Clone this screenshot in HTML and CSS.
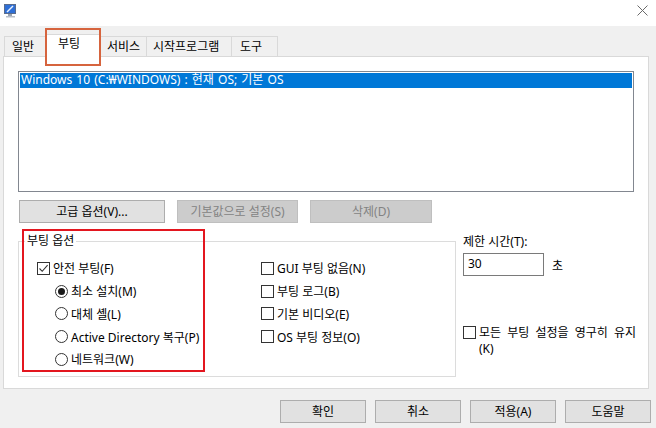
FILE: index.html
```html
<!DOCTYPE html>
<html lang="ko">
<head>
<meta charset="utf-8">
<title>시스템 구성</title>
<link rel="stylesheet" href="styles.css">
</head>
<body>
<div class="window">
  <div class="titlebar">
    <svg class="app-icon" width="15" height="15" viewBox="0 0 15 15">
      <rect x="1" y="1" width="12" height="10" fill="#5a6c8c"/>
      <rect x="2" y="2" width="10" height="8" fill="#2f6fd6"/>
      <path d="M4 9 L10 3" stroke="#e8f2ff" stroke-width="1.4"/>
      <rect x="5" y="11" width="4" height="2" fill="#9aa3b0"/>
      <rect x="3" y="13" width="9" height="1.5" fill="#b9bfc8"/>
    </svg>
    <svg class="close" width="11" height="11" viewBox="0 0 11 11">
      <path d="M0.5 0.5 L10.5 10.5 M10.5 0.5 L0.5 10.5" stroke="#6a6a6a" stroke-width="1"/>
    </svg>
  </div>

  <div class="tabs">
    <div class="tab">일반</div>
    <div class="tab active">부팅</div>
    <div class="tab">서비스</div>
    <div class="tab">시작프로그램</div>
    <div class="tab">도구</div>
  </div>

  <div class="panel">
    <div class="listbox">
      <div class="item selected">Windows 10 (C:₩WINDOWS) : 현재 OS; 기본 OS</div>
    </div>

    <div class="btnrow">
      <div class="btn w146">고급 옵션(V)...</div>
      <div class="btn disabled w121">기본값으로 설정(S)</div>
      <div class="btn disabled w122">삭제(D)</div>
    </div>

    <div class="lower">
      <div class="group">
        <span class="group-label">부팅 옵션</span>
        <div class="group-cols">
          <div class="col left">
            <div class="row"><span class="cb checked"><svg width="11" height="11" viewBox="0 0 11 11"><path d="M1.5 5.5 L4.2 8.3 L9.6 2.2" fill="none" stroke="#333" stroke-width="1.1"/></svg></span><span>안전 부팅(F)</span></div>
            <div class="row indent"><span class="rb on"></span><span>최소 설치(M)</span></div>
            <div class="row indent"><span class="rb"></span><span>대체 셸(L)</span></div>
            <div class="row indent"><span class="rb"></span><span>Active Directory 복구(P)</span></div>
            <div class="row indent"><span class="rb"></span><span>네트워크(W)</span></div>
          </div>
          <div class="col right">
            <div class="row"><span class="cb"></span><span>GUI 부팅 없음(N)</span></div>
            <div class="row"><span class="cb"></span><span>부팅 로그(B)</span></div>
            <div class="row"><span class="cb"></span><span>기본 비디오(E)</span></div>
            <div class="row"><span class="cb"></span><span>OS 부팅 정보(O)</span></div>
          </div>
        </div>
      </div>

      <div class="side">
        <div class="side-label">제한 시간(T):</div>
        <div class="timeout">
          <div class="textbox">30</div>
          <span class="unit">초</span>
        </div>
        <div class="persist">
          <span class="cb"></span>
          <span class="persist-text">모든 부팅 설정을 영구히 유지<br>(K)</span>
        </div>
      </div>
    </div>
  </div>

  <div class="footer">
    <div class="btn fbtn">확인</div>
    <div class="btn fbtn">취소</div>
    <div class="btn fbtn">적용(A)</div>
    <div class="btn fbtn">도움말</div>
  </div>

  <div class="mark mark-tab"></div>
  <div class="mark mark-group"></div>
</div>
</body>
</html>
```

FILE: styles.css
```css
* { box-sizing: border-box; }

html, body {
  margin: 0;
  padding: 0;
}

body {
  width: 656px;
  height: 428px;
  overflow: hidden;
  background: #f0f0f0;
  font-family: "Noto Sans", "Noto Sans CJK KR", sans-serif;
  font-size: 12px;
  color: #000;
}

.window {
  position: relative;
  width: 656px;
  height: 428px;
}

.titlebar {
  height: 26px;
  background: #fff;
  display: flex;
  align-items: flex-start;
  justify-content: space-between;
  padding: 3px 8px 0 3px;
}

.close {
  margin-top: 2px;
}

.tabs {
  display: flex;
  align-items: flex-end;
  margin-top: 8px;
  padding-left: 4px;
  height: 22px;
  position: relative;
  z-index: 1;
}

.tab {
  height: 20px;
  line-height: 19px;
  padding: 0 7px;
  border: 1px solid #d9d9d9;
  border-bottom: none;
  margin-left: -1px;
  background: #f0f0f0;
  white-space: nowrap;
}

.tab:first-child { margin-left: 0; width: 43px; }

.tab.active {
  height: 23px;
  width: 55px;
  line-height: 17px;
  background: #fff;
  padding: 0 11px;
  margin-bottom: -1px;
  position: relative;
}

.tab:nth-child(3) { width: 47px; padding: 0 6px; }
.tab:nth-child(4) { width: 86px; padding: 0 6px; }
.tab:nth-child(5) { width: 47px; padding: 0 8px; }

.panel {
  margin-left: 3px;
  width: 646px;
  height: 333px;
  background: #fff;
  border: 1px solid #d9d9d9;
  padding: 14px 0 0 14px;
}

.listbox {
  width: 616px;
  height: 121px;
  border: 1px solid #828790;
  padding: 1px;
  background: #fff;
}

.item {
  height: 15px;
  line-height: 14px;
  padding-left: 1px;
  white-space: nowrap;
  word-spacing: 1px;
}

.item.selected {
  background: #0078d7;
  color: #fff;
}

.btnrow {
  display: flex;
  margin-top: 8px;
  padding-left: 1px;
  gap: 12px;
}

.btn {
  height: 23px;
  line-height: 21px;
  text-align: center;
  background: #e1e1e1;
  border: 1px solid #adadad;
  white-space: nowrap;
}

.btn.disabled {
  background: #cccccc;
  border-color: #bfbfbf;
  color: #838383;
}

.w146 { width: 146px; }
.w121 { width: 121px; }
.w122 { width: 122px; }

.lower {
  display: flex;
  align-items: flex-start;
  margin-top: 11px;
}

.group {
  position: relative;
  width: 438px;
  height: 136px;
  margin-top: 7px;
  border: 1px solid #dcdcdc;
  padding: 15px 0 0 18px;
}

.group-label {
  position: absolute;
  top: -9px;
  left: 6px;
  padding: 0 2px;
  line-height: 16px;
  background: #fff;
}

.group-cols {
  display: flex;
}

.col.left { width: 224px; }

.row {
  height: 22.75px;
  display: flex;
  align-items: center;
  white-space: nowrap;
}

.row.indent { padding-left: 18px; }

.cb {
  width: 13px;
  height: 13px;
  border: 1px solid #333;
  background: #fff;
  margin-right: 3px;
  flex: none;
  display: flex;
  align-items: center;
  justify-content: center;
}

.rb {
  width: 13px;
  height: 13px;
  border: 1px solid #333;
  border-radius: 50%;
  background: #fff;
  margin-right: 3px;
  flex: none;
  display: flex;
  align-items: center;
  justify-content: center;
}

.rb.on::after {
  content: "";
  width: 7px;
  height: 7px;
  border-radius: 50%;
  background: #1a1a1a;
}

.side {
  margin-left: 7px;
  width: 184px;
}

.side-label {
  line-height: 16px;
}

.timeout {
  display: flex;
  align-items: center;
  margin-top: 3px;
}

.textbox {
  width: 81px;
  height: 23px;
  border: 1px solid #7a7a7a;
  line-height: 20px;
  padding-left: 4px;
  background: #fff;
}

.unit {
  margin-left: 8px;
}

.persist {
  display: flex;
  align-items: flex-start;
  margin-top: 49px;
}

.persist .cb {
  margin-top: 1px;
}

.persist-text {
  line-height: 16px;
  word-spacing: 3px;
  white-space: nowrap;
}

.footer {
  display: flex;
  justify-content: flex-end;
  gap: 9px;
  margin-top: 11px;
  padding-right: 5px;
}

.fbtn { width: 86px; }

.mark {
  position: absolute;
  pointer-events: none;
}

.mark-tab {
  left: 45px;
  top: 28px;
  width: 56px;
  height: 38px;
  border: 2px solid #d6643e;
  z-index: 3;
}

.mark-group {
  left: 22px;
  top: 229px;
  width: 183px;
  height: 143px;
  border: 2px solid #e3161f;
  z-index: 3;
}
```
